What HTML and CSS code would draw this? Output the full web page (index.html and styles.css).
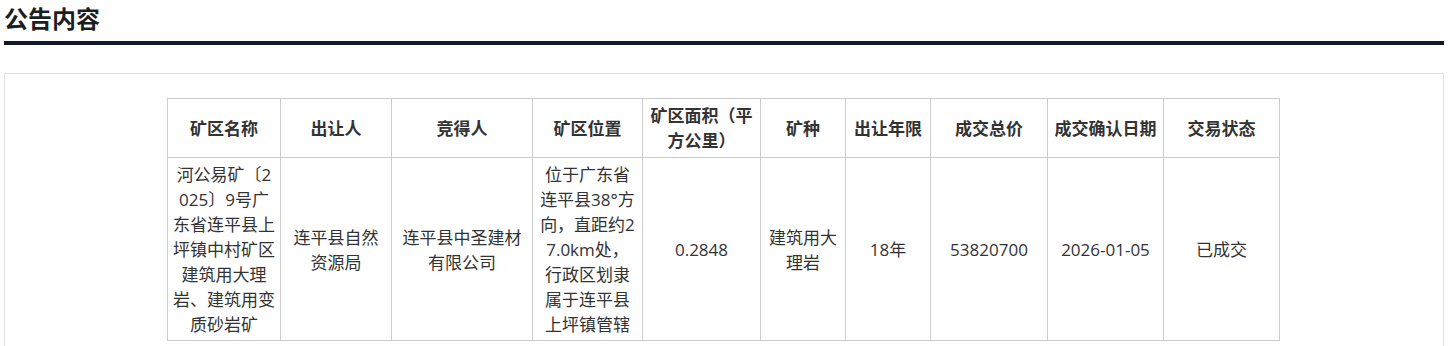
FILE: index.html
```html
<!DOCTYPE html>
<html lang="zh-CN">
<head>
<meta charset="utf-8">
<title>公告内容</title>
<link rel="stylesheet" href="styles.css">
</head>
<body>
<div class="page">
  <h2 class="section-title">公告内容</h2>
  <div class="content-box">
    <table class="notice-table">
      <colgroup>
        <col class="c-name">
        <col class="c-seller">
        <col class="c-buyer">
        <col class="c-loc">
        <col class="c-area">
        <col class="c-kind">
        <col class="c-years">
        <col class="c-price">
        <col class="c-date">
        <col class="c-status">
      </colgroup>
      <thead>
        <tr>
          <th>矿区名称</th>
          <th>出让人</th>
          <th>竞得人</th>
          <th>矿区位置</th>
          <th>矿区面积（平方公里）</th>
          <th>矿种</th>
          <th>出让年限</th>
          <th>成交总价</th>
          <th>成交确认日期</th>
          <th>交易状态</th>
        </tr>
      </thead>
      <tbody>
        <tr>
          <td>河公易矿〔2025〕9号广东省连平县上坪镇中村矿区建筑用大理岩、建筑用变质砂岩矿</td>
          <td>连平县自然资源局</td>
          <td>连平县中圣建材有限公司</td>
          <td class="cell-loc">位于广东省连平县38°方向，直距约27.0km处，行政区划隶属于连平县上坪镇管辖</td>
          <td>0.2848</td>
          <td>建筑用大理岩</td>
          <td>18年</td>
          <td>53820700</td>
          <td>2026-01-05</td>
          <td>已成交</td>
        </tr>
      </tbody>
    </table>
  </div>
</div>
</body>
</html>
```

FILE: styles.css
```css
html, body {
  margin: 0;
  padding: 0;
  background: #ffffff;
}

.page {
  padding: 0 4px;
  font-family: "Open Sans", "Noto Sans CJK SC", sans-serif;
  color: #333333;
}

.section-title {
  margin: 0;
  font-family: "Noto Sans CJK SC", sans-serif;
  font-size: 24px;
  font-weight: 700;
  line-height: 36px;
  padding-bottom: 5px;
  color: #1b1f24;
  border-bottom: 4px solid #111b28;
}

.content-box {
  margin-top: 28px;
  border: 1px solid #dddddd;
  padding: 24px 1px 24px 0;
  display: flex;
  justify-content: center;
}

.notice-table {
  border-collapse: collapse;
  table-layout: fixed;
  width: 1113px;
  font-size: 17px;
  line-height: 25px;
  text-align: center;
  word-break: break-all;
}

.notice-table th,
.notice-table td {
  border: 1px solid #cccccc;
  padding: 4px 4.5px;
  vertical-align: middle;
}

.notice-table th {
  font-weight: 700;
  color: #333333;
}

.notice-table td {
  padding-top: 4px;
  padding-bottom: 3px;
}

.notice-table td.cell-loc {
  padding-left: 6px;
  padding-right: 6px;
}

.c-name { width: 113px; }
.c-seller { width: 111px; }
.c-buyer { width: 141px; }
.c-loc { width: 110px; }
.c-area { width: 118px; }
.c-kind { width: 85px; }
.c-years { width: 85px; }
.c-price { width: 117px; }
.c-date { width: 116px; }
.c-status { width: 116px; }
```
